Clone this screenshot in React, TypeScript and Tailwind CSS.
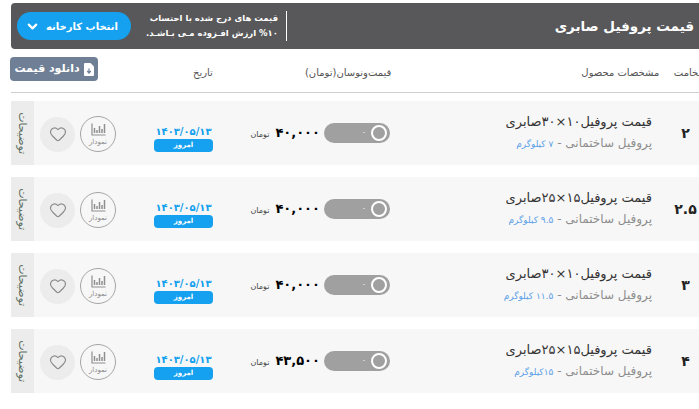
import { ChevronDown, Heart } from 'lucide-react';

const font = { fontFamily: '"DejaVu Sans", "Noto Sans", sans-serif' };

const rows = [
  { size: '۲', dims: '۱۰×۳۰', weight: '۷ کیلوگرم', price: '۴۰,۰۰۰' },
  { size: '۲.۵', dims: '۱۵×۲۵', weight: '۹.۵ کیلوگرم', price: '۴۰,۰۰۰' },
  { size: '۳', dims: '۱۰×۳۰', weight: '۱۱.۵ کیلوگرم', price: '۴۰,۰۰۰' },
  { size: '۴', dims: '۱۵×۲۵', weight: '۱۵کیلوگرم', price: '۴۳,۵۰۰' },
];

// نمودار icon
function BarsIcon() {
  return (
    <svg width="15" height="13" viewBox="0 0 15 13" fill="none" stroke="#8f8f8f">
      <path d="M1 0.5V12H14.5" strokeWidth="1.2" />
      <path d="M3.5 10V5M6 10V7M8.5 10V3M11 10V6M13.5 10V1" strokeWidth="1.5" />
    </svg>
  );
}

function FileIcon() {
  return (
    <svg width="10" height="13" viewBox="0 0 10 13">
      <path d="M1 0H6.5L10 3.5V12a1 1 0 0 1-1 1H1a1 1 0 0 1-1-1V1a1 1 0 0 1 1-1Z" fill="#fff" />
      <path d="M5 5.5V9.5M3.2 8L5 10L6.8 8" fill="none" stroke="#6f7f95" strokeWidth="1.2" />
    </svg>
  );
}

function Row({ size, dims, weight, price }: (typeof rows)[number]) {
  return (
    <div className="flex h-16 items-center bg-[#f7f7f7]">
      <div className="flex h-full w-[23px] shrink-0 items-center justify-center overflow-hidden bg-[#ececec]">
        <span dir="rtl" className="rotate-90 text-[11px] whitespace-nowrap text-[#5d6f62]">توضیحات</span>
      </div>
      <div className="mt-0.5 ml-1.5 flex h-[35px] w-[35px] shrink-0 items-center justify-center rounded-full bg-[#ececec]">
        <Heart size={18} strokeWidth={1.5} className="text-[#8a8a8a]" />
      </div>
      <div className="mt-0.5 ml-[5px] flex h-9 w-9 shrink-0 flex-col items-center justify-center rounded-full border border-[#a5a5a5]">
        <BarsIcon />
        <span dir="rtl" className="mt-0.5 text-[7px] leading-[8px] text-[#8a8a8a]">نمودار</span>
      </div>
      <div className="ml-[38px] flex w-[59px] shrink-0 flex-col items-center pt-[11px]">
        <span className="text-[10px] leading-3 font-bold text-[#11a0ee]">۱۴۰۳/۰۵/۱۳</span>
        <span dir="rtl" className="mt-px w-full rounded-sm bg-[#15a1ef] text-center text-[7px] leading-[13px] font-bold text-white">امروز</span>
      </div>
      <div className="flex w-[107px] shrink-0 items-center justify-end gap-1.5">
        <span dir="rtl" className="pt-1 text-[8px] text-[#444]">تومان</span>
        <span className="text-[13px] font-bold text-black">{price}</span>
      </div>
      <div className="ml-1 flex h-5 w-[66px] shrink-0 items-center justify-end gap-[5px] rounded-full bg-[#a0a0a0] pr-[3px]">
        <span className="text-[8px] text-white">۰</span>
        <span className="h-4 w-4 rounded-full border-2 border-white" />
      </div>
      <div dir="rtl" className="ml-auto flex w-[190px] shrink-0 flex-col items-start gap-[5px]">
        <span className="text-[13px] leading-4 whitespace-nowrap text-[#333]">قیمت پروفیل{dims}صابری</span>
        <span className="text-[12px] leading-4 whitespace-nowrap text-[#8d8d8d]">
          پروفیل ساختمانی - <span className="text-[9px] text-[#5c9fe8]">{weight}</span>
        </span>
      </div>
      <div className="w-[47px] shrink-0 pl-5 text-center text-[14px] font-bold text-[#222]">{size}</div>
    </div>
  );
}

export default function App() {
  return (
    <div style={font} className="h-[409px] w-[699px] overflow-hidden bg-white pt-[3px] pl-[11px]">
      <div className="flex h-[46px] items-center rounded-l-sm bg-[#58585a] pr-[5px] pl-1.5 text-white">
        <button className="flex h-7 w-[114px] items-center gap-1.5 rounded-full bg-[#15a1ef] pl-2 text-[10px] font-bold">
          <ChevronDown size={15} strokeWidth={3.5} />
          <span dir="rtl">انتخاب کارخانه</span>
        </button>
        <div dir="rtl" className="ml-[18px] w-[138px] border-r border-white pr-2 text-[8.5px] leading-[15px] font-bold whitespace-nowrap">
          <div>قیمت های درج شده با احتساب</div>
          <div>{'۱۰\u200F% ارزش افـزوده مـی بـاشـد.'}</div>
        </div>
        <h1 dir="rtl" className="ml-auto text-[13.5px] font-bold">قیمت پروفیل صابری</h1>
      </div>
      <div className="flex h-[44px] items-start border-b border-[#cfcfcf] pt-[8px] text-[10px] text-[#555]">
        <button dir="rtl" className="flex h-6 w-[88px] -translate-x-px items-center justify-center gap-1 rounded-sm bg-[#6f7f95] text-[11px] font-bold text-white">
          <FileIcon />
          دانلود قیمت
        </button>
        <span dir="rtl" className="mt-2 ml-[94px]">تاریخ</span>
        <span dir="rtl" className="mt-2 ml-[92px]">قیمت‌ونوسان(تومان)</span>
        <span dir="rtl" className="mt-2 ml-[190px]">مشخصات محصول</span>
        <span dir="rtl" className="mt-2 ml-auto -mr-2">ضخامت</span>
      </div>
      <div className="mt-2 flex flex-col gap-3">
        {rows.map((r) => (
          <Row key={r.size} {...r} />
        ))}
      </div>
    </div>
  );
}
